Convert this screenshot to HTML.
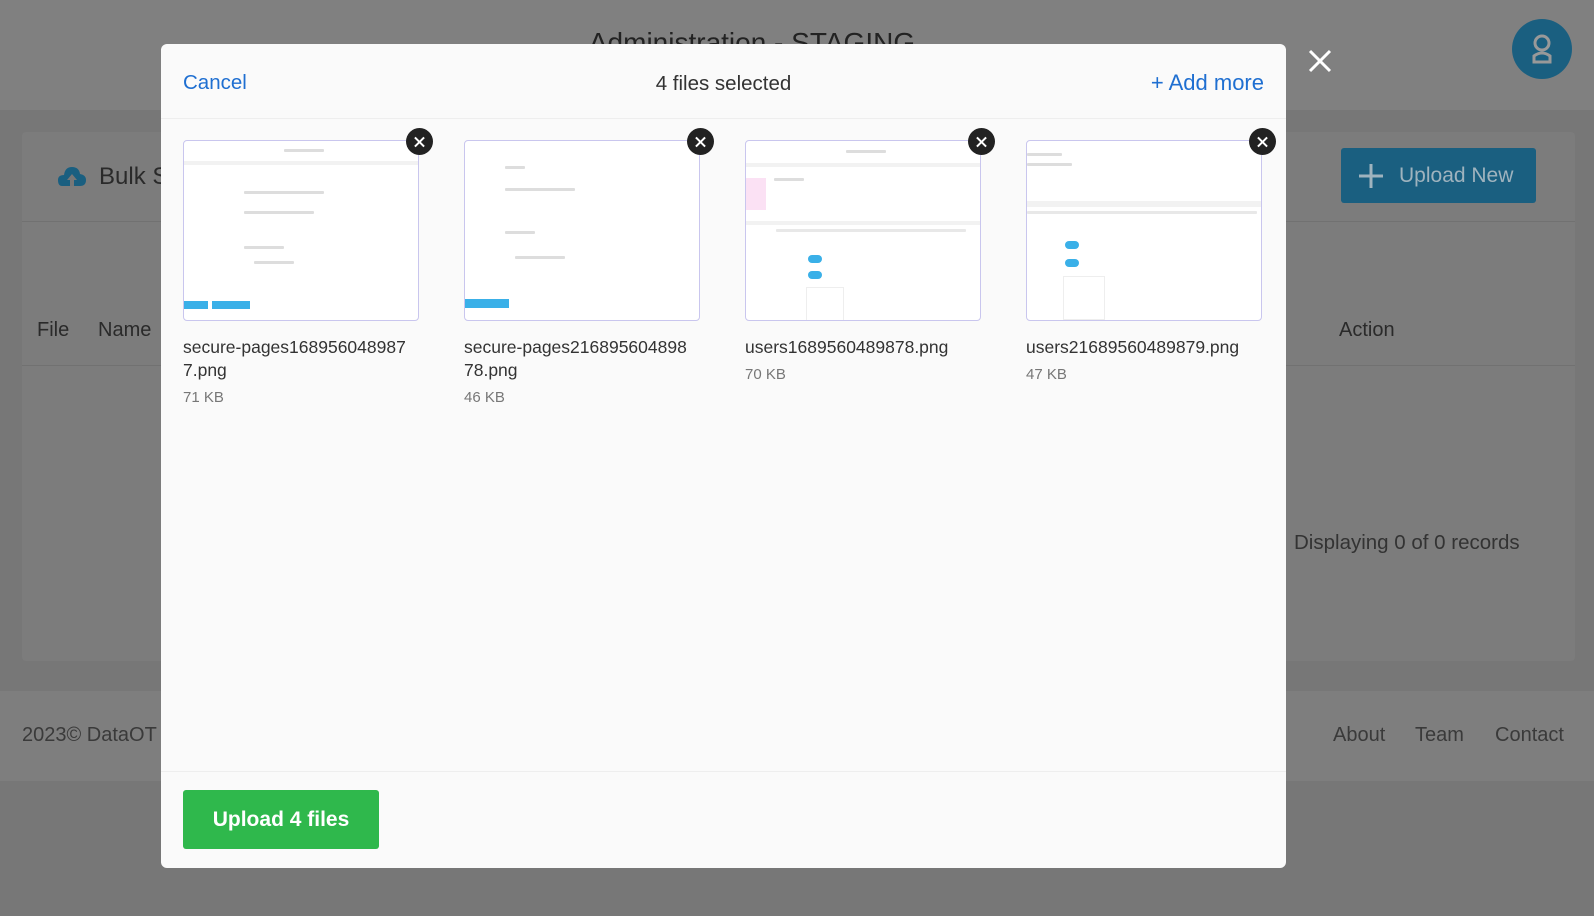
<!DOCTYPE html>
<html><head><meta charset="utf-8"><style>
*{box-sizing:border-box;margin:0;padding:0}
body{width:1594px;height:916px;overflow:hidden;background:#777;font-family:"Liberation Sans",sans-serif;position:relative}
.abs{position:absolute}
.t{color:#2a2a2a;font-size:20px}
.modal{position:absolute;left:161px;top:44px;width:1125px;height:824px;background:#fafafa;border-radius:6px;overflow:hidden}
.thumb{position:absolute;top:96px;width:236px;height:181px;background:#fff;border:1px solid #c9c6ee;border-radius:4px;overflow:hidden}
.x{position:absolute;width:27px;height:27px;border-radius:50%;background:#222;top:84px}
.x:before,.x:after{content:"";position:absolute;left:7px;top:12.5px;width:13px;height:2px;background:#fff;transform:rotate(45deg)}
.x:after{transform:rotate(-45deg)}
.fn{position:absolute;top:292px;font-size:17.5px;line-height:23px;color:#333;width:250px}
.sz{color:#777;font-size:15px;margin-top:4px}
.ln{position:absolute;height:1px;background:#eee;left:0;right:0}
.g{position:absolute;height:3px;background:#ddd;border-radius:1px}
</style></head><body>
<div class="abs" style="left:0;top:0;width:1594px;height:110px;background:#808080"></div>
<div class="abs" style="left:0;top:27px;width:1504px;text-align:center;font-size:28px;color:#222">Administration - STAGING</div>
<div class="abs" style="left:1512px;top:19px;width:60px;height:60px;border-radius:50%;background:#1a5f80"></div>
<svg class="abs" style="left:1528px;top:32px" width="28" height="34" viewBox="0 0 28 34"><circle cx="14" cy="11" r="7" fill="none" stroke="#999" stroke-width="3"/><path d="M6 30 L6 24 Q14 18 22 24 L22 30 Z" fill="none" stroke="#999" stroke-width="3"/></svg>
<svg class="abs" style="left:1308px;top:49px" width="24" height="24"><path d="M2 2L22 22M22 2L2 22" stroke="#fff" stroke-width="3"/></svg>
<div class="abs" style="left:22px;top:132px;width:1553px;height:529px;background:#7c7c7c;border-radius:4px"></div>
<div class="abs" style="left:22px;top:221px;width:1553px;height:1px;background:#717171"></div>
<div class="abs" style="left:22px;top:365px;width:1553px;height:1px;background:#717171"></div>
<svg class="abs" style="left:58px;top:164px" width="28" height="24"><path d="M4 22 Q0 22 0 16 Q0 11 6 11 Q7 3 14 3 Q21 3 22 10 Q28 11 28 16 Q28 22 22 22 Z" fill="#1a5f80"/><path d="M14 10 L9 16 H12 V22 H16 V16 H19 Z" fill="#777"/></svg>
<div class="abs t" style="left:99px;top:163px;font-size:24px">Bulk S</div>
<div class="abs" style="left:1341px;top:148px;width:195px;height:55px;background:#1a5f80;border-radius:3px;font-size:21px;line-height:55px;padding-left:58px;color:#9fb3be">Upload New</div>
<svg class="abs" style="left:1359px;top:164px" width="24" height="24"><path d="M12 0V24M0 12H24" stroke="#9fb3be" stroke-width="3"/></svg>
<div class="abs t" style="left:37px;top:319px">File</div>
<div class="abs t" style="left:98px;top:319px">Name</div>
<div class="abs t" style="left:1339px;top:319px">Action</div>
<div class="abs" style="left:1294px;top:531px;font-size:20.5px;color:#333">Displaying 0 of 0 records</div>
<div class="abs" style="left:0;top:691px;width:1594px;height:90px;background:#7e7e7e"></div>
<div class="abs" style="left:22px;top:724px;font-size:20px;color:#3a3a3a">2023© DataOT</div>
<div class="abs" style="left:1333px;top:724px;font-size:20px;color:#3a3a3a">About</div>
<div class="abs" style="left:1415px;top:724px;font-size:20px;color:#3a3a3a">Team</div>
<div class="abs" style="left:1495px;top:724px;font-size:20px;color:#3a3a3a">Contact</div>

<div class="modal">
 <div class="abs" style="left:22px;top:27px;font-size:20.5px;color:#1f6fd1">Cancel</div>
 <div class="abs" style="left:0;width:1125px;top:28px;text-align:center;font-size:20.5px;color:#333">4 files selected</div>
 <div class="abs" style="right:22px;top:26px;font-size:22px;color:#1f6fd1">+ Add more</div>
 <div class="ln" style="top:74px"></div>
 <div class="thumb" style="left:22px"><div class="g" style="left:100px;top:8px;width:40px"></div><div class="ln" style="top:20px;background:#f2f2f2;height:4px"></div><div class="g" style="left:60px;top:50px;width:80px"></div><div class="g" style="left:60px;top:70px;width:70px"></div><div class="g" style="left:60px;top:105px;width:40px"></div><div class="g" style="left:70px;top:120px;width:40px"></div><div class="abs" style="left:0;top:160px;width:24px;height:8px;background:#3ab0e8"></div><div class="abs" style="left:28px;top:160px;width:38px;height:8px;background:#3ab0e8"></div></div>
 <div class="x" style="left:245px"></div>
 <div class="thumb" style="left:303px"><div class="g" style="left:40px;top:25px;width:20px"></div><div class="g" style="left:40px;top:47px;width:70px"></div><div class="g" style="left:40px;top:90px;width:30px"></div><div class="g" style="left:50px;top:115px;width:50px"></div><div class="abs" style="left:0;top:158px;width:44px;height:9px;background:#3ab0e8"></div></div>
 <div class="x" style="left:526px"></div>
 <div class="thumb" style="left:584px"><div class="g" style="left:100px;top:9px;width:40px"></div><div class="ln" style="top:22px;background:#f2f2f2;height:4px"></div><div class="abs" style="left:0;top:37px;width:20px;height:32px;background:#fbe1f4"></div><div class="g" style="left:28px;top:37px;width:30px"></div><div class="ln" style="top:80px;background:#f2f2f2;height:4px"></div><div class="g" style="left:30px;top:88px;width:190px;background:#e8e8e8"></div><div class="abs" style="left:62px;top:114px;width:14px;height:8px;border-radius:4px;background:#3ab0e8"></div><div class="abs" style="left:62px;top:130px;width:14px;height:8px;border-radius:4px;background:#3ab0e8"></div><div class="abs" style="left:60px;top:146px;width:38px;height:40px;border:1px solid #eee"></div></div>
 <div class="x" style="left:807px"></div>
 <div class="thumb" style="left:865px"><div class="g" style="left:0;top:12px;width:35px"></div><div class="g" style="left:0;top:22px;width:45px"></div><div class="ln" style="top:60px;background:#f2f2f2;height:6px"></div><div class="g" style="left:0;top:70px;width:230px;background:#e8e8e8"></div><div class="abs" style="left:38px;top:100px;width:14px;height:8px;border-radius:4px;background:#3ab0e8"></div><div class="abs" style="left:38px;top:118px;width:14px;height:8px;border-radius:4px;background:#3ab0e8"></div><div class="abs" style="left:36px;top:135px;width:42px;height:44px;border:1px solid #eee"></div></div>
 <div class="x" style="left:1088px"></div>
 <div class="fn" style="left:22px">secure-pages168956048987<br>7.png<div class="sz">71 KB</div></div>
 <div class="fn" style="left:303px">secure-pages216895604898<br>78.png<div class="sz">46 KB</div></div>
 <div class="fn" style="left:584px">users1689560489878.png<div class="sz">70 KB</div></div>
 <div class="fn" style="left:865px">users21689560489879.png<div class="sz">47 KB</div></div>
 <div class="ln" style="top:727px"></div>
 <div class="abs" style="left:22px;top:746px;width:196px;height:59px;background:#2fb84c;border-radius:3px;color:#fff;font-size:21px;font-weight:bold;text-align:center;line-height:59px">Upload 4 files</div>
</div>
</body></html>
